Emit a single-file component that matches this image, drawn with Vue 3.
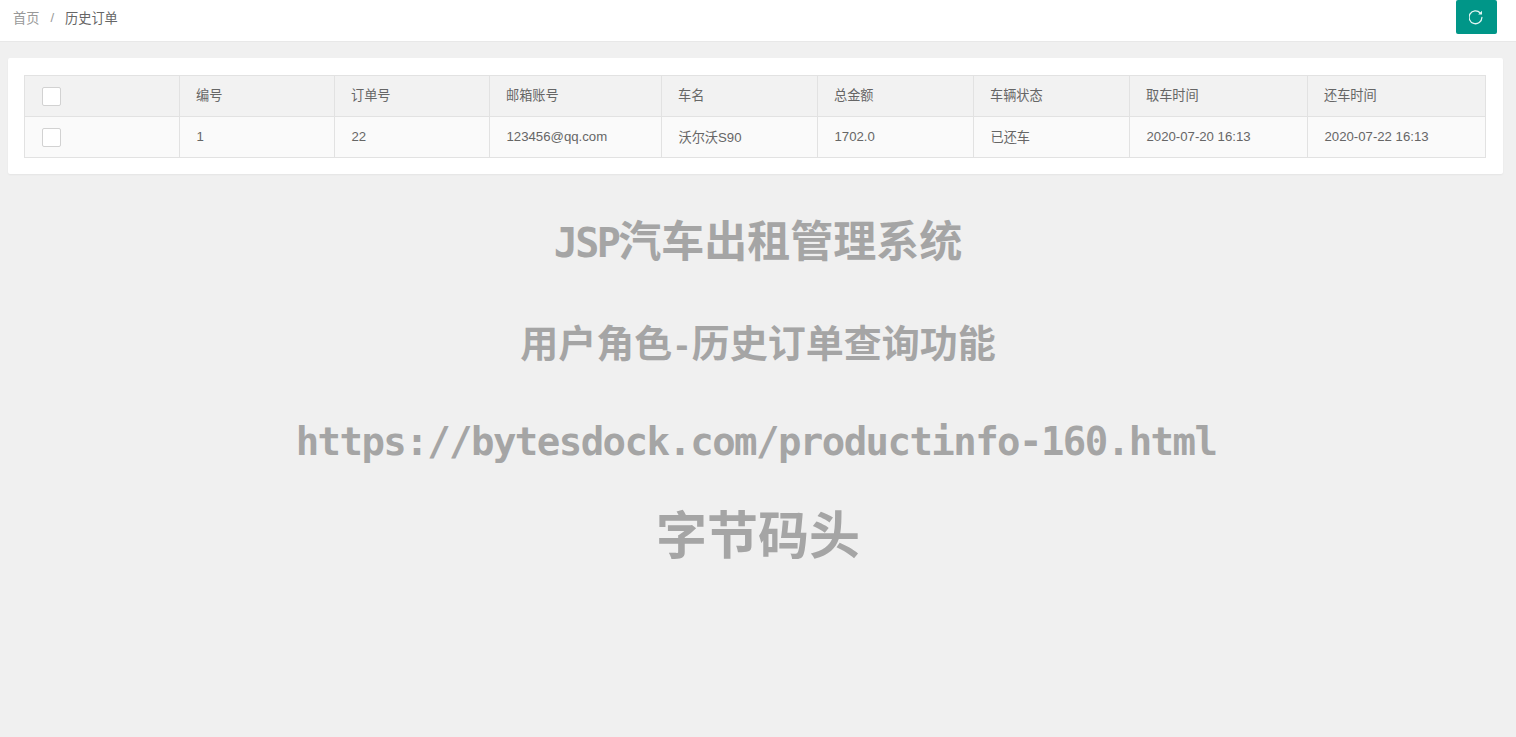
<script setup>
const columns = [
  { key: "check", width: 155 },
  { key: "id", label: "编号", width: 155 },
  { key: "orderNo", label: "订单号", width: 155 },
  { key: "email", label: "邮箱账号", width: 172 },
  { key: "car", label: "车名", width: 156 },
  { key: "total", label: "总金额", width: 156 },
  { key: "status", label: "车辆状态", width: 156 },
  { key: "pickup", label: "取车时间", width: 178 },
  { key: "back", label: "还车时间", width: 178 },
];

const orders = [
  {
    id: "1",
    orderNo: "22",
    email: "123456@qq.com",
    car: "沃尔沃S90",
    total: "1702.0",
    status: "已还车",
    pickup: "2020-07-20 16:13",
    back: "2020-07-22 16:13",
  },
];
</script>

<template>
  <div class="page">
    <header class="topbar">
      <nav class="crumbs">
        <a class="crumb">首页</a>
        <span class="sep">/</span>
        <span class="crumb current">历史订单</span>
      </nav>
      <button class="refresh" type="button" aria-label="刷新">
        <svg width="16" height="16" viewBox="0 0 16 16" fill="none">
          <path d="M11.2 4A6.4 6.4 0 1 0 12.9 8.5" stroke="#e2f5f3" stroke-width="1.3" stroke-linecap="round" />
          <path d="M13 1.8v3.8h-3.8z" fill="#e2f5f3" />
        </svg>
      </button>
    </header>

    <section class="card">
      <table class="grid">
        <colgroup>
          <col v-for="col in columns" :key="col.key" :style="{ width: col.width + 'px' }" />
        </colgroup>
        <thead>
          <tr>
            <th v-for="col in columns" :key="col.key">
              <span v-if="col.key === 'check'" class="checkbox"></span>
              <template v-else>{{ col.label }}</template>
            </th>
          </tr>
        </thead>
        <tbody>
          <tr v-for="row in orders" :key="row.orderNo">
            <td v-for="col in columns" :key="col.key">
              <span v-if="col.key === 'check'" class="checkbox"></span>
              <template v-else>{{ row[col.key] }}</template>
            </td>
          </tr>
        </tbody>
      </table>
    </section>

    <div class="notes">
      <p class="note title"><span class="half">JSP</span>汽车出租管理系统</p>
      <p class="note sub">用户角色<span class="half">-</span>历史订单查询功能</p>
      <p class="note url">https://bytesdock.com/productinfo-160.html</p>
      <p class="note brand">字节码头</p>
    </div>
  </div>
</template>

<style>
html,
body {
  margin: 0;
  background: #f0f0f0;
}
</style>

<style scoped>
.page {
  min-height: 737px;
  background: #f0f0f0;
  font-family: "Liberation Sans", "Noto Sans CJK SC", sans-serif;
  font-size: 13.2px;
  color: #666;
}

.topbar {
  display: flex;
  align-items: flex-start;
  justify-content: space-between;
  height: 41px;
  padding: 0 19px 0 13px;
  background: #fff;
  border-bottom: 1px solid #e8e8e8;
}

.crumbs {
  display: flex;
  align-items: center;
  height: 34px;
}

.crumb {
  color: #999;
}

.crumb.current {
  color: #666;
}

.sep {
  margin: 0 11px;
  color: #999;
}

.refresh {
  display: flex;
  align-items: center;
  justify-content: center;
  width: 41px;
  height: 34px;
  padding: 0;
  border: 0;
  border-radius: 2px;
  background: #009688;
}

.card {
  margin: 16px 13px 0 8px;
  padding: 17px 17px 16px 16px;
  background: #fff;
  border-radius: 2px;
  box-shadow: 0 1px 2px rgba(0, 0, 0, 0.05);
}

.grid {
  width: 1462px;
  table-layout: fixed;
  border-collapse: collapse;
}

.grid th,
.grid td {
  height: 41px;
  border: 1px solid #e2e2e2;
  font-weight: 400;
  text-align: left;
  box-sizing: border-box;
}

.grid th {
  padding: 0 16px 4px;
  background: #f2f2f2;
}

.grid td {
  padding: 0 16px 2px 16.5px;
  background: #fafafa;
}

.checkbox {
  display: block;
  width: 19px;
  height: 19px;
  margin: 2px 0 0 0.5px;
  box-sizing: border-box;
  border: 1px solid #d2d2d2;
  border-radius: 2px;
  background: #fff;
}

.grid th .checkbox {
  margin: 4px 0 0 1px;
}

.notes {
  display: flex;
  flex-direction: column;
  align-items: center;
  color: #a5a5a5;
  font-family: "Noto Sans CJK SC", sans-serif;
  font-weight: 700;
}

.note {
  margin: 0;
  height: 60px;
  line-height: 60px;
  white-space: nowrap;
}

.half {
  font-family: "DejaVu Sans Mono", monospace;
}

.title {
  margin-top: 34px;
  font-size: 43px;
}

.title .half {
  font-size: 40px;
  letter-spacing: -2.6px;
}

.sub {
  margin-top: 43px;
  font-size: 38px;
}

.sub .half {
  font-size: 32px;
}

.url {
  margin-top: 41px;
  padding-right: 4px;
  font-family: "DejaVu Sans Mono", monospace;
  font-size: 39px;
  letter-spacing: -1.56px;
}

.brand {
  margin-top: 30px;
  font-size: 51px;
}
</style>
